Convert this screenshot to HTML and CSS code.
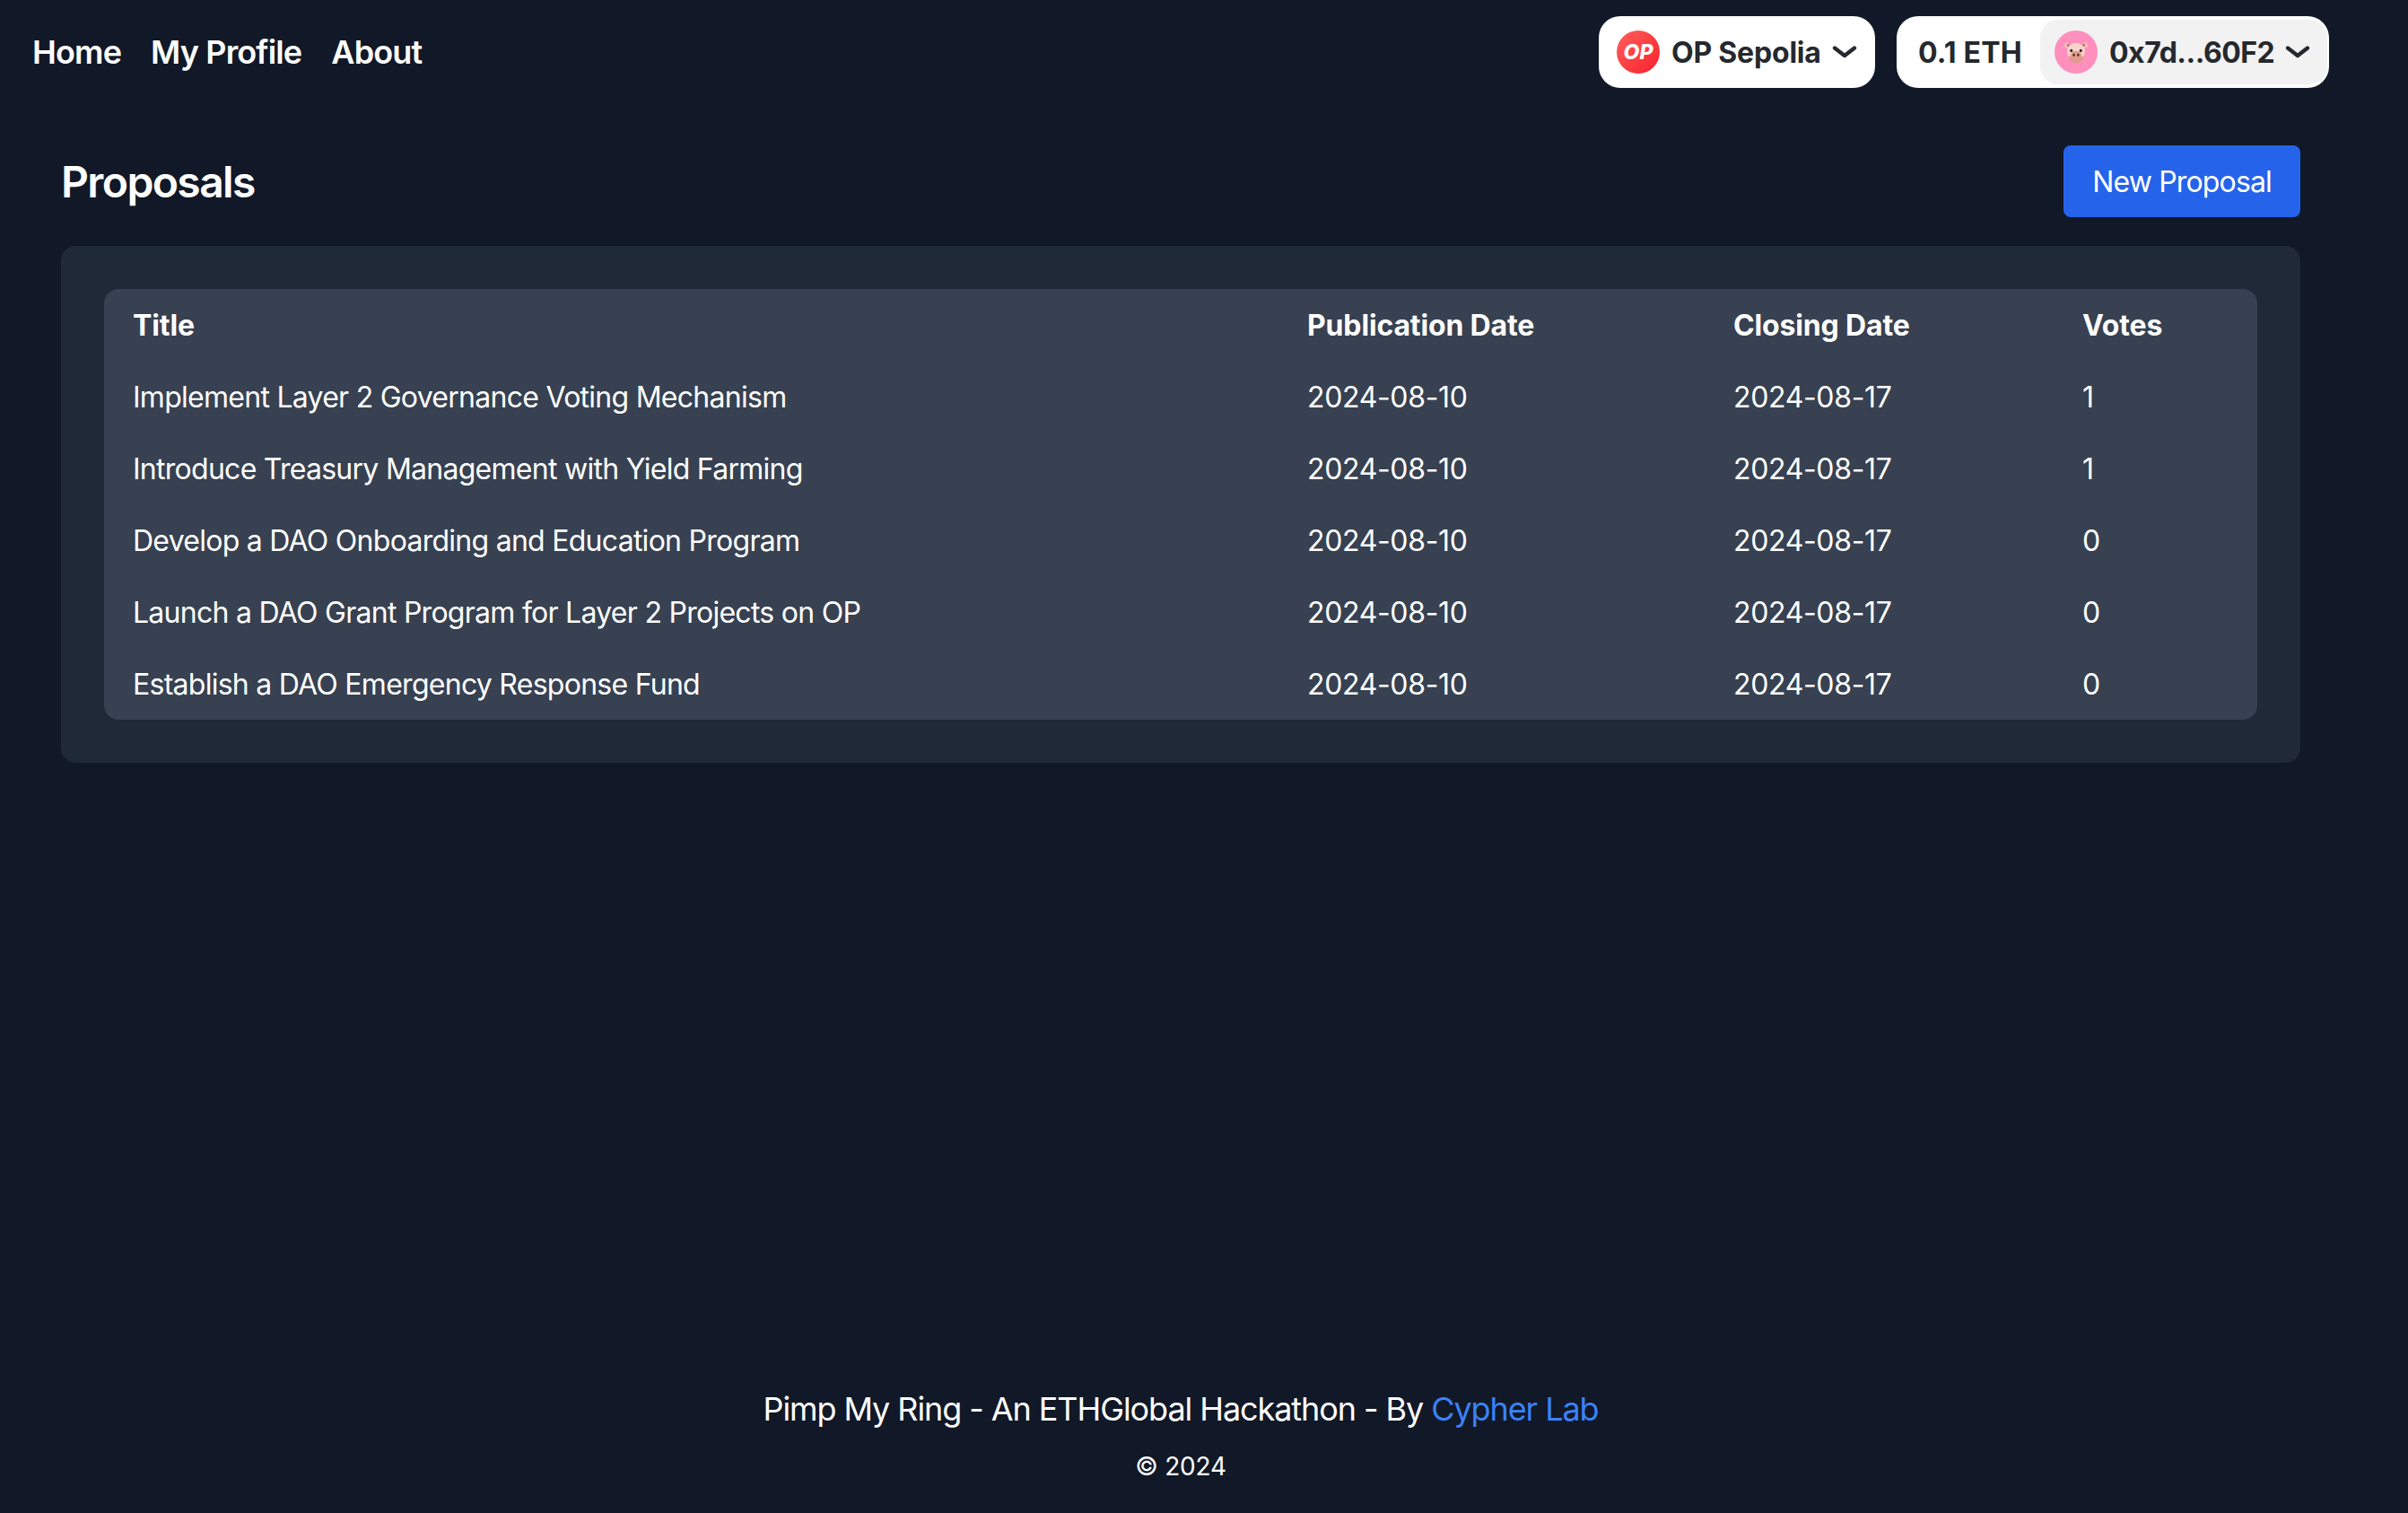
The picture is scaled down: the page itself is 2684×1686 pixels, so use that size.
FILE: index.html
```html
<!DOCTYPE html>
<html lang="en">
<head>
    <meta charset="UTF-8">
    <meta name="viewport" content="width=device-width, initial-scale=1.0">
    <title>Pimp My Ring</title>
    <link rel="stylesheet" href="styles.css">
</head>
<body>
    <div class="page">
        <!-- Top navigation -->
        <header class="topbar">
            <nav class="nav">
                <a href="#">Home</a>
                <a href="#">My Profile</a>
                <a href="#">About</a>
            </nav>
            <div class="wallet">
                <button class="pill chain-pill">
                    <span class="op-logo">OP</span>
                    <span>OP Sepolia</span>
                    <svg class="chevron" viewBox="0 0 28 16" fill="none"><path d="M3 3.5 L14 12 L25 3.5" stroke="#25292e" stroke-width="4.4" stroke-linecap="round" stroke-linejoin="round"/></svg>
                </button>
                <div class="pill account-pill">
                    <span class="balance">0.1 ETH</span>
                    <button class="address">
                        <span class="avatar">
                            <svg viewBox="0 0 32 32" class="pig">
                                <path d="M5 3 C1 2 -1 6 1 10 L8 11 Z" fill="#eec3b6"/>
                                <path d="M27 3 C31 2 33 6 31 10 L24 11 Z" fill="#eec3b6"/>
                                <path d="M3.5 5 L8 6 L4.5 9 Z" fill="#a8695f"/>
                                <path d="M28.5 5 L24 6 L27.5 9 Z" fill="#a8695f"/>
                                <ellipse cx="16" cy="15.5" rx="12.5" ry="12" fill="#f6d3c8"/>
                                <ellipse cx="16" cy="25" rx="10" ry="6" fill="#dd9c8e"/>
                                <circle cx="9.5" cy="14" r="1.9" fill="#33231f"/>
                                <circle cx="22.5" cy="14" r="1.9" fill="#33231f"/>
                                <ellipse cx="16" cy="20" rx="7.5" ry="5.4" fill="#e59a8d"/>
                                <ellipse cx="13" cy="20" rx="1.5" ry="2.2" fill="#5c2f2a"/>
                                <ellipse cx="19" cy="20" rx="1.5" ry="2.2" fill="#5c2f2a"/>
                            </svg>
                        </span>
                        <span class="addr-text">0x7d...60F2</span>
                        <svg class="chevron" viewBox="0 0 28 16" fill="none"><path d="M3 3.5 L14 12 L25 3.5" stroke="#25292e" stroke-width="4.4" stroke-linecap="round" stroke-linejoin="round"/></svg>
                    </button>
                </div>
            </div>
        </header>

        <main class="content">
            <div class="title-row">
                <h1>Proposals</h1>
                <a class="new-btn" href="#">New Proposal</a>
            </div>
            <div class="panel">
                <table class="proposals">
                    <colgroup>
                        <col class="col-title">
                        <col class="col-pub">
                        <col class="col-close">
                        <col class="col-votes">
                    </colgroup>
                    <thead>
                        <tr><th>Title</th><th>Publication Date</th><th>Closing Date</th><th>Votes</th></tr>
                    </thead>
                    <tbody>
                        <tr><td>Implement Layer 2 Governance Voting Mechanism</td><td>2024-08-10</td><td>2024-08-17</td><td>1</td></tr>
                        <tr><td>Introduce Treasury Management with Yield Farming</td><td>2024-08-10</td><td>2024-08-17</td><td>1</td></tr>
                        <tr><td>Develop a DAO Onboarding and Education Program</td><td>2024-08-10</td><td>2024-08-17</td><td>0</td></tr>
                        <tr><td>Launch a DAO Grant Program for Layer 2 Projects on OP</td><td>2024-08-10</td><td>2024-08-17</td><td>0</td></tr>
                        <tr><td>Establish a DAO Emergency Response Fund</td><td>2024-08-10</td><td>2024-08-17</td><td>0</td></tr>
                    </tbody>
                </table>
            </div>
        </main>

        <footer class="footer">
            <p class="credit">Pimp My Ring - An ETHGlobal Hackathon - By <a href="#">Cypher Lab</a></p>
            <p class="copy">© 2024</p>
        </footer>
    </div>
</body>
</html>
```

FILE: styles.css
```css
html, body {
    margin: 0;
    background-color: #111827;
}

body {
    font-family: Inter, "Noto Sans", sans-serif;
    color: #fff;
}

.page {
    width: 2632px;
    min-height: 1686px;
    display: flex;
    flex-direction: column;
}

/* Top navigation */
.topbar {
    display: flex;
    justify-content: space-between;
    align-items: center;
    padding: 18px 36px 0;
}

.nav {
    display: flex;
    gap: 33px;
}

.nav a {
    color: #fff;
    text-decoration: none;
    font-size: 36px;
    font-weight: 600;
    line-height: 48px;
    letter-spacing: -0.85px;
}

.wallet {
    display: flex;
    gap: 24px;
}

.pill {
    height: 80px;
    box-sizing: border-box;
    background-color: #fff;
    border-radius: 24px;
    border: none;
    display: flex;
    align-items: center;
    color: #25292e;
    font-family: inherit;
    font-size: 32px;
    font-weight: 700;
    padding: 0;
}

.chain-pill {
    width: 308px;
    padding-left: 20px;
    gap: 13px;
    letter-spacing: -0.2px;
}

.op-logo {
    width: 48px;
    height: 48px;
    border-radius: 50%;
    background: linear-gradient(135deg, #ff5f5c, #f8212b);
    color: #fff;
    font-size: 23px;
    font-weight: 800;
    font-style: italic;
    letter-spacing: 0;
    display: flex;
    align-items: center;
    justify-content: center;
}

.chevron {
    width: 28px;
    height: 16px;
    margin-left: -1px;
}

.account-pill {
    width: 482px;
    padding: 4px 2px 4px 0;
}

.balance {
    width: 160px;
    padding-left: 24px;
    box-sizing: border-box;
    letter-spacing: 0.2px;
}

.address {
    flex: 1;
    height: 72px;
    border: none;
    border-radius: 20px;
    background-color: #f2f2f3;
    color: #25292e;
    font: inherit;
    display: flex;
    align-items: center;
    gap: 13px;
    padding: 0 0 0 16px;
}

.addr-text {
    letter-spacing: -0.5px;
}

.avatar {
    width: 48px;
    height: 48px;
    border-radius: 50%;
    background-color: #ff8fbd;
    display: flex;
    align-items: center;
    justify-content: center;
}

.pig {
    width: 26px;
    height: 26px;
}

/* Main content */
.content {
    padding: 64px 68px 0;
    flex: 1;
}

.title-row {
    display: flex;
    justify-content: space-between;
    align-items: center;
    margin-bottom: 32px;
}

h1 {
    margin: 0;
    font-size: 48px;
    font-weight: 600;
    line-height: 64px;
    letter-spacing: -1.6px;
    padding-top: 2px;
}

.new-btn {
    background-color: #2563eb;
    color: #fff;
    text-decoration: none;
    font-size: 32px;
    line-height: 48px;
    letter-spacing: -0.85px;
    padding: 17px 32px 15px;
    border-radius: 8px;
}

.panel {
    background-color: #1f2937;
    border-radius: 16px;
    padding: 48px;
}

.proposals {
    width: 100%;
    table-layout: fixed;
    border-collapse: separate;
    border-spacing: 0;
    background-color: #374151;
    border-radius: 16px;
    font-size: 32px;
    line-height: 48px;
}

.col-title { width: 1309px; }
.col-pub { width: 475px; }
.col-close { width: 389px; }
.col-votes { width: 227px; }

.proposals th, .proposals td {
    padding: 17px 32px 15px;
    text-align: left;
}

.proposals th {
    font-weight: 700;
    letter-spacing: -0.15px;
}

.proposals td {
    font-weight: 400;
    letter-spacing: -0.35px;
}

.proposals td:first-child {
    letter-spacing: -0.73px;
}

/* Footer */
.footer {
    text-align: center;
    padding-bottom: 32px;
}

.footer p {
    margin: 0;
}

.footer .credit {
    font-size: 36px;
    line-height: 56px;
    letter-spacing: -1.08px;
    margin-bottom: 16px;
}

.credit a {
    color: #3b82f6;
    text-decoration: none;
}

.copy {
    font-size: 28px;
    line-height: 40px;
    letter-spacing: -0.2px;
}
```
